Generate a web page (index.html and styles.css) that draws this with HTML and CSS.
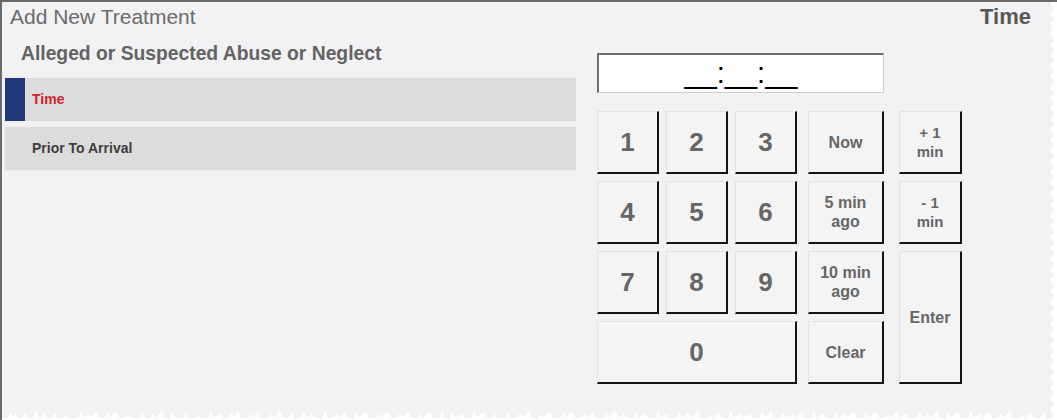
FILE: index.html
```html
<!DOCTYPE html>
<html lang="en">
<head>
<meta charset="utf-8">
<title>Add New Treatment</title>
<link rel="stylesheet" href="styles.css">
</head>
<body>
<div class="frame">
  <header class="header">
    <div class="title">Add New Treatment</div>
    <div class="field-name">Time</div>
  </header>
  <div class="content">
    <section class="left">
      <h2 class="group">Alleged or Suspected Abuse or Neglect</h2>
      <div class="rows">
        <div class="row active"><span class="marker"></span><span class="label">Time</span></div>
        <div class="row"><span class="marker"></span><span class="label">Prior To Arrival</span></div>
      </div>
    </section>
    <section class="right">
      <div class="time-input">__:__:__</div>
      <div class="keypad">
        <button class="key digit">1</button>
        <button class="key digit">2</button>
        <button class="key digit">3</button>
        <button class="key word c4">Now</button>
        <button class="key word c5">+ 1<br>min</button>
        <button class="key digit">4</button>
        <button class="key digit">5</button>
        <button class="key digit">6</button>
        <button class="key word c4">5 min<br>ago</button>
        <button class="key word c5">- 1<br>min</button>
        <button class="key digit">7</button>
        <button class="key digit">8</button>
        <button class="key digit">9</button>
        <button class="key word c4">10 min<br>ago</button>
        <button class="key word c5 enter">Enter</button>
        <button class="key digit zero">0</button>
        <button class="key word c4">Clear</button>
      </div>
    </section>
  </div>
  <svg class="torn" width="1057" height="420" viewBox="0 0 1057 420" aria-hidden="true">
    <path fill="#ffffff" d="M1057 0 L1052 0 L1050 4 L1054 9 L1050 14 L1054 19 L1050 24 L1053 29 L1050 34 L1054 40 L1050 45 L1054 50 L1051 55 L1054 60 L1050 66 L1054 71 L1050 76 L1054 82 L1050 88 L1054 93 L1050 98 L1054 103 L1050 109 L1054 114 L1051 119 L1054 124 L1050 130 L1054 135 L1050 140 L1054 146 L1050 151 L1054 157 L1050 162 L1054 167 L1050 173 L1054 178 L1050 183 L1054 189 L1050 194 L1054 200 L1050 205 L1054 210 L1050 216 L1054 221 L1050 226 L1054 232 L1050 237 L1054 243 L1050 248 L1054 253 L1050 259 L1054 264 L1050 270 L1054 275 L1050 280 L1054 286 L1050 291 L1054 296 L1050 302 L1054 307 L1050 313 L1054 318 L1050 323 L1054 329 L1050 334 L1054 340 L1050 345 L1054 350 L1050 356 L1054 361 L1050 367 L1054 372 L1050 377 L1054 383 L1050 388 L1054 394 L1050 399 L1054 404 L1050 410 L1053 416 L1057 420 Z"/>
    <path fill="#ffffff" d="M0 420 L0 418 L8 418 L10 412 L13 418 L15 414 L18 418 L22 418 L25 413 L28 418 L33 418 L36 411 L40 418 L44 414 L47 418 L52 418 L55 413 L58 418 L63 418 L66 415 L70 418 L78 418 L81 411 L84 418 L88 414 L91 418 L96 412 L99 418 L104 418 L107 413 L110 418 L116 411 L119 418 L125 418 L128 414 L131 418 L139 418 L142 412 L145 418 L150 418 L153 414 L156 418 L162 411 L165 418 L170 418 L173 413 L176 418 L183 418 L186 412 L189 418 L196 418 L199 415 L202 418 L208 418 L211 412 L214 418 L220 414 L223 418 L228 418 L231 413 L234 418 L238 411 L241 418 L247 418 L250 414 L253 418 L258 412 L261 418 L268 418 L271 414 L274 418 L280 411 L283 418 L288 418 L291 413 L294 418 L300 418 L303 412 L306 418 L312 414 L315 418 L322 418 L325 411 L328 418 L333 418 L336 414 L339 418 L345 412 L348 418 L354 418 L357 413 L360 418 L366 411 L369 418 L375 418 L378 414 L381 418 L388 412 L391 418 L397 418 L400 413 L403 418 L408 411 L411 418 L417 418 L420 414 L423 418 L430 412 L433 418 L439 418 L442 411 L445 418 L450 418 L453 413 L456 418 L462 414 L465 418 L471 418 L474 411 L477 418 L483 412 L486 418 L492 418 L495 414 L498 418 L505 418 L508 412 L511 418 L517 418 L520 413 L523 418 L529 411 L532 418 L538 418 L541 414 L544 418 L550 412 L553 418 L560 418 L563 413 L566 418 L572 411 L575 418 L581 418 L584 414 L587 418 L593 412 L596 418 L603 418 L606 413 L609 418 L615 411 L618 418 L624 414 L627 418 L633 418 L636 412 L639 418 L645 413 L648 418 L655 418 L658 411 L661 418 L667 414 L670 418 L676 418 L679 412 L682 418 L688 413 L691 418 L698 411 L701 418 L707 418 L710 414 L713 418 L719 412 L722 418 L728 418 L731 411 L734 418 L740 413 L743 418 L750 414 L753 418 L759 418 L762 412 L765 418 L771 411 L774 418 L780 418 L783 413 L786 418 L793 414 L796 418 L802 412 L805 418 L811 418 L814 411 L817 418 L823 413 L826 418 L833 418 L836 412 L839 418 L845 414 L848 418 L854 411 L857 418 L863 418 L866 413 L869 418 L876 412 L879 418 L885 418 L888 414 L891 418 L897 411 L900 418 L906 413 L909 418 L916 418 L919 412 L922 418 L928 414 L931 418 L937 411 L940 418 L946 418 L949 413 L952 418 L958 412 L961 418 L968 418 L971 411 L974 418 L980 414 L983 418 L989 412 L992 418 L998 418 L1001 413 L1004 418 L1010 411 L1013 418 L1019 418 L1022 414 L1025 418 L1031 412 L1034 418 L1040 418 L1043 413 L1046 418 L1057 418 L1057 420 Z"/>
  </svg>
</div>
</body>
</html>
```

FILE: styles.css
```css
html, body {
  margin: 0;
  padding: 0;
  background: #ffffff;
}

.frame {
  position: relative;
  width: 1055px;
  height: 418px;
  border-top: 2px solid #6a6a6a;
  border-left: 2px solid #6a6a6a;
  background: #f2f2f4;
  font-family: "Liberation Sans", Arial, sans-serif;
  overflow: hidden;
}

.header {
  display: flex;
  justify-content: space-between;
  align-items: center;
  height: 30px;
  padding: 0 26px 0 8px;
}

.title {
  font-size: 21px;
  color: #6b6b6b;
  line-height: 28px;
}

.field-name {
  font-size: 22px;
  font-weight: bold;
  color: #575757;
  line-height: 30px;
}

.content {
  display: flex;
}

.left {
  width: 571px;
  margin-left: 3px;
}

.group {
  margin: 10px 0 0 16px;
  font-size: 19.3px;
  line-height: 24px;
  font-weight: bold;
  color: #636363;
}

.rows {
  display: flex;
  flex-direction: column;
  gap: 6px;
  margin-top: 12px;
}

.row {
  display: flex;
  align-items: center;
  height: 43px;
  background: #dcdcdd;
}

.marker {
  width: 20px;
  align-self: stretch;
}

.row.active .marker {
  background: #22377a;
}

.label {
  margin-left: 7px;
  margin-top: -1px;
  font-size: 14px;
  font-weight: bold;
  color: #3d3d3d;
}

.row.active .label {
  color: #d61f2c;
}

.right {
  margin-left: 21px;
  padding-top: 21px;
}

.time-input {
  box-sizing: border-box;
  width: 287px;
  height: 40px;
  background: #ffffff;
  border-top: 2px solid #6e6e6e;
  border-left: 2px solid #6e6e6e;
  border-right: 1px solid #cfcfcf;
  border-bottom: 1px solid #cfcfcf;
  font-size: 29px;
  line-height: 36px;
  text-align: center;
  color: #000000;
}

.keypad {
  display: grid;
  grid-template-columns: 62px 62px 62px 80px 71px;
  grid-auto-rows: 63px;
  gap: 7px;
  margin-top: 18px;
}

.key {
  box-sizing: border-box;
  margin: 0;
  padding: 0;
  background: #f4f4f5;
  border-top: 1px solid #e3e3e5;
  border-left: 1px solid #e3e3e5;
  border-right: 2px solid #141414;
  border-bottom: 2px solid #141414;
  border-radius: 0;
  color: #666666;
  font-family: "Liberation Sans", Arial, sans-serif;
  font-weight: bold;
  cursor: pointer;
}

.digit {
  font-size: 26px;
}

.word {
  font-size: 16px;
  line-height: 19px;
}

.c4 {
  width: 76px;
  justify-self: end;
}

.c5 {
  width: 63px;
  justify-self: end;
  font-size: 15px;
}

.enter {
  grid-row: span 2;
  font-size: 16px;
}

.zero {
  grid-column: span 3;
}

.torn {
  position: absolute;
  left: -2px;
  top: -2px;
  pointer-events: none;
}
```
